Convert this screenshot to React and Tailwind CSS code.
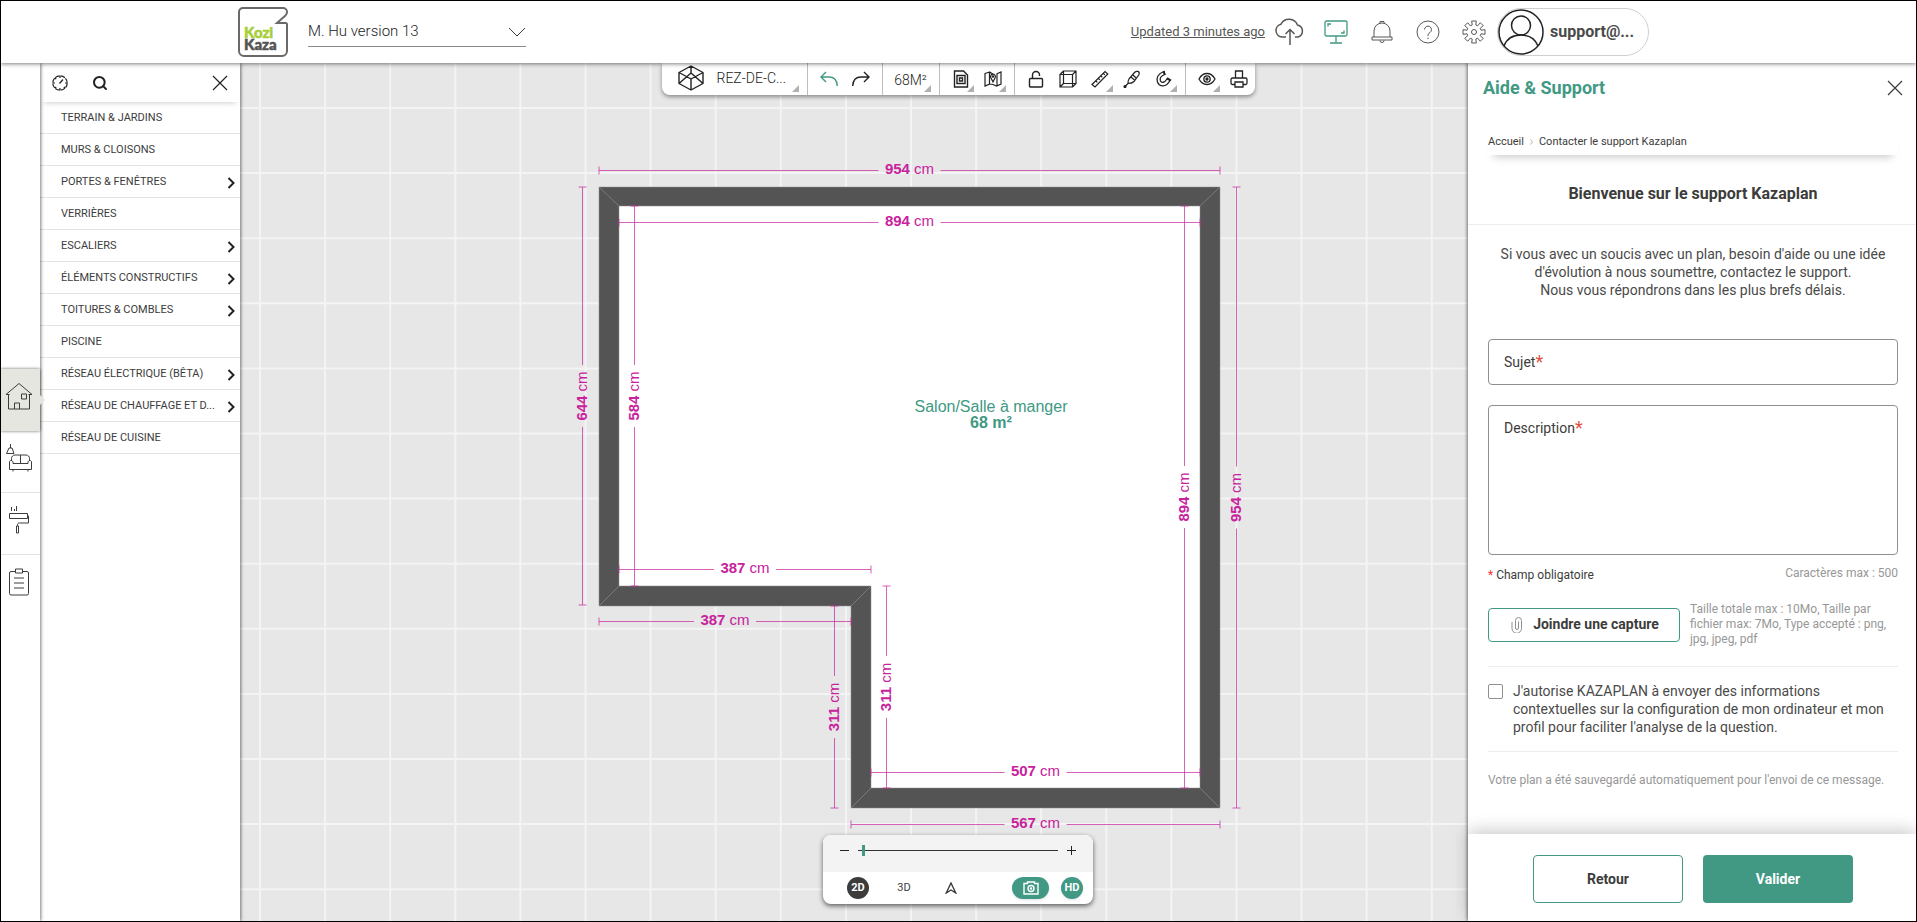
import { useState } from 'react'
import { Search } from 'lucide-react'

const MENU = [
  { label: 'TERRAIN & JARDINS' },
  { label: 'MURS & CLOISONS' },
  { label: 'PORTES & FENÊTRES', children: true },
  { label: 'VERRIÈRES' },
  { label: 'ESCALIERS', children: true },
  { label: 'ÉLÉMENTS CONSTRUCTIFS', children: true },
  { label: 'TOITURES & COMBLES', children: true },
  { label: 'PISCINE' },
  { label: 'RÉSEAU ÉLECTRIQUE (BÊTA)', children: true },
  { label: 'RÉSEAU DE CHAUFFAGE ET D...', children: true },
  { label: 'RÉSEAU DE CUISINE' },
]

// from / to run along the line, at is the fixed coordinate
const DIMENSIONS = [
  { value: 954, axis: 'x', at: 170, from: 599, to: 1220 },
  { value: 894, axis: 'x', at: 222, from: 619, to: 1200 },
  { value: 387, axis: 'x', at: 569, from: 619, to: 871 },
  { value: 387, axis: 'x', at: 621, from: 599, to: 851 },
  { value: 507, axis: 'x', at: 772, from: 871, to: 1200 },
  { value: 567, axis: 'x', at: 824, from: 851, to: 1220 },
  { value: 644, axis: 'y', at: 582, from: 187, to: 605 },
  { value: 584, axis: 'y', at: 634, from: 206, to: 586 },
  { value: 311, axis: 'y', at: 834, from: 606, to: 808 },
  { value: 311, axis: 'y', at: 886, from: 586, to: 788 },
  { value: 894, axis: 'y', at: 1184, from: 206, to: 788 },
  { value: 954, axis: 'y', at: 1236, from: 187, to: 808 },
]

const GRID = Array.from({ length: 22 }, (_, i) => i)

function Icon({ size = 24, width, height, box = '0 0 24 24', stroke = 1, className = '', children }) {
  return (
    <svg
      width={width || size}
      height={height || size}
      viewBox={box}
      fill="none"
      stroke="currentColor"
      strokeWidth={stroke}
      className={`shrink-0 ${className}`}
      aria-hidden="true"
    >
      {children}
    </svg>
  )
}

function Logo() {
  return (
    <svg width="50" height="50" viewBox="0 0 50 50" className="shrink-0" role="img" aria-label="Kozi Kaza">
      <path
        d="M5 1h40a4 4 0 0 1 4 4c0 1.500-.5 2.500-1.500 3.500L39 16h8.500q1.500 0 1.500 1.500V44a5 5 0 0 1-5 5H6a5 5 0 0 1-5-5V5a4 4 0 0 1 4-4z"
        fill="#fff"
        stroke="#6b6868"
        strokeWidth="2"
      />
      <text fontFamily="Lato, sans-serif" fontSize="15" fontWeight="900" strokeWidth=".5">
        <tspan x="6" y="31" fill="#a6ce39" stroke="#a6ce39">Kozi</tspan>
        <tspan x="6" y="43" fill="#545454" stroke="#545454">Kaza</tspan>
      </text>
    </svg>
  )
}

function Header() {
  return (
    <header className="relative z-30 flex h-[62px] shrink-0 items-center bg-white pl-[237px] pr-[267px] shadow-[0_1px_4px_rgba(0,0,0,0.5)]">
      <Logo />
      <div className="relative ml-5 flex w-[218px] items-center border-b border-[#8a8a8a]">
        <select aria-label="Version du plan" className="h-7 w-full appearance-none bg-transparent text-[15px] font-light text-[#222] outline-none">
          <option>M. Hu version 13</option>
        </select>
        <Icon width={18} height={10} box="0 0 18 10" className="pointer-events-none absolute right-0 text-[#3c3c3b]">
          <path d="M1 1l8 8 8-8" />
        </Icon>
      </div>

      <div className="ml-auto flex items-center text-[#575756]">
        <a href="#historique" className="mr-0.5 text-[13px] underline">Updated 3 minutes ago</a>
        <button aria-label="Sauvegarder" className="flex w-[46px] justify-center">
          <Icon width={32} height={28} box="0 0 32 28" stroke={1.500}>
            <path d="M12 19H8a6.500 6.500 0 0 1-1-12.800A9 9 0 0 1 23.500 7 6.200 6.200 0 0 1 24 19h-3" />
            <path d="M16 27V12M11.500 16L16 11.500l4.500 4.500" />
          </Icon>
        </button>
        <button aria-label="Plein écran" className="flex w-[46px] justify-center text-[#419984]">
          <Icon width={24} height={24} stroke={1.300}>
            <rect x="1" y="1" width="22" height="15" rx="1.500" />
            <path d="M12 16v6.500M6 23h12M4 6.500V4h3M20 10.500V13h-3" />
          </Icon>
        </button>
        <button aria-label="Notifications" className="flex w-[46px] justify-center">
          <Icon width={24} height={24}>
            <path d="M4 17V11a8 8 0 0 1 16 0v6M2 17h20v3H2zM10 3V1.500h4V3M10 20.500a2 2 0 0 0 4 0" />
          </Icon>
        </button>
        <button aria-label="Aide" className="flex w-[46px] justify-center">
          <Icon width={24} height={24}>
            <circle cx="12" cy="12" r="11" />
            <path d="M8.500 9.500a3.500 3.500 0 1 1 5.500 3c-1.500 1-2 1.500-2 3.500M12 17.500v1.500" />
          </Icon>
        </button>
        <button aria-label="Paramètres" className="flex w-[46px] justify-center">
          <Icon width={24} height={24}>
            <circle cx="12" cy="12" r="2.500" />
            <path
              d="M10.200 5L9.700 1h4.600l-.5 4 1.900.8L18.300 2.700l3 3L18.200 8.300l.8 1.900 4-.5v4.600l-4-.5-.8 1.900 3.100 2.600-3 3-2.600-3.100-1.900.8.5 4H9.700l.5-4-1.900-.8-2.600 3.100-3-3L5.800 15.700 5 13.800l-4 .5V9.700l4 .5.800-1.900L2.700 5.700l3-3 2.600 3.100z"
              strokeLinejoin="round"
            />
          </Icon>
        </button>
        <button className="flex h-12 w-[152px] items-center gap-1.5 rounded-full border border-[#d0d0d0] text-[#3c3c3b]">
          <Icon size={46} box="0 0 46 46" stroke={1.500} className="text-[#222]">
            <circle cx="23" cy="23" r="22" />
            <circle cx="23" cy="16.500" r="9.500" />
            <path d="M6 37c3-8 9-11 17-11s14 3 17 11" />
          </Icon>
          <span className="text-base font-bold text-[#4a4a49]">support@...</span>
        </button>
      </div>
    </header>
  )
}

function Rail() {
  const tile = 'relative flex h-[62px] w-full items-center justify-center pb-2 pr-[3px]'
  return (
    <nav className="relative z-20 flex w-[39px] shrink-0 flex-col justify-center bg-white pt-0.5 text-[#3c3c3b] shadow-[1px_0_3px_rgba(0,0,0,0.5)]">
      <button aria-label="Construire" className={`${tile} bg-[#e6e6e1] shadow-[0_0_3px_rgba(0,0,0,0.6)]`}>
        <Icon size={28} box="0 0 28 28">
          <path d="M1 12.500h3.500M27 12.500h-3.500M1 12.500L14 1.500l13 11M3.500 12v15h21V12M16.500 12h5v5h-5zM9.500 27v-6h5v6" />
        </Icon>
        <span className="absolute left-full top-[26px] h-0 w-0 border-y-[5px] border-l-[5px] border-y-transparent border-l-[#e6e6e1]" />
      </button>
      <button aria-label="Meubler" className={`${tile} border-b border-[#e3e3e3]`}>
        <Icon size={28} box="0 0 28 28">
          <path d="M5.500 0v4M4 4h3l2 5.500H1.500zM6.500 17v-2.500c0-2 1.500-3.500 3.500-3.500h11c2 0 3.500 1.500 3.500 3.500V17M15.500 11v8.500M4.500 25.500V18c0-2 3-2 3.500 0v1.500h15V18c.5-2 3.500-2 3.500 0v7.500zM8 25.500v2M23 25.500v2" />
        </Icon>
      </button>
      <button aria-label="Décorer" className={`${tile} border-b border-[#e3e3e3]`}>
        <Icon size={28} box="0 0 28 28">
          <path d="M6.500 1v4M9.500 3v2M11.500 0v5M4.500 7.500h18v5h-18zM22.500 10h1v7h-9c-2 0-2 1-2 3M11.500 20h2v7h-2z" />
        </Icon>
      </button>
      <button aria-label="Liste" className={tile}>
        <Icon size={28} box="0 0 28 28">
          <path d="M10 3.500H6a1.500 1.500 0 0 0-1.500 1.500v20.500A1.500 1.500 0 0 0 6 27h16a1.500 1.500 0 0 0 1.500-1.500V5A1.500 1.500 0 0 0 22 3.500h-4M10.500 1h7v4h-7zM9 10h10M9 15h10M9 20h10" />
        </Icon>
      </button>
    </nav>
  )
}

function CloseIcon({ size = 16 }) {
  return (
    <Icon size={size} box="0 0 16 16" stroke={1.200}>
      <path d="M1 1l14 14M15 1L1 15" />
    </Icon>
  )
}

function MenuPanel() {
  return (
    <aside className="z-10 flex w-[200px] shrink-0 flex-col bg-white text-[#222] shadow-[1px_0_3px_rgba(0,0,0,0.5)]">
      <div className="flex h-[39px] items-center px-3 pt-px shadow-[0_4px_6px_-4px_rgba(0,0,0,0.25)]">
        <button aria-label="Récents">
          <Icon size={16} box="0 0 16 16" stroke={1.200}>
            <circle cx="8" cy="8" r="7.200" strokeDasharray="4.900 .8" />
            <path d="M8 1v2M8 13v2M1 8h2M13 8h2M3 3l1.200 1.200M3 13l1.200-1.200M13 13l-1.200-1.200M7.500 8.500l3.500-4" />
          </Icon>
        </button>
        <button aria-label="Rechercher" className="ml-6">
          <Search size={16} strokeWidth={3} />
        </button>
        <button aria-label="Fermer le menu" className="ml-auto">
          <CloseIcon />
        </button>
      </div>
      <ul>
        {MENU.map((item) => (
          <li key={item.label} className="h-8 border-b border-[#e3e3e3]">
            <button className="flex h-full w-full items-center justify-between pl-[21px] pr-1 pt-0.5 text-left">
              <span className="whitespace-nowrap text-[11px] text-[#3c3c3b]">{item.label}</span>
              {item.children && (
                <Icon width={9} height={12} box="0 0 9 12" stroke={2}>
                  <path d="M1.500 1L6.500 6l-5 5" />
                </Icon>
              )}
            </button>
          </li>
        ))}
      </ul>
    </aside>
  )
}

function Dimension({ value, axis, at, from, to }) {
  const mid = (from + to) / 2
  const length = (to - from) / 2
  const turn = axis === 'y' ? ' rotate(-90)' : ''
  const origin = axis === 'y' ? `${at + 0.5} ${mid}` : `${mid} ${at + 0.5}`
  return (
    <g transform={`translate(${origin})${turn}`}>
      <path
        d={`M${-length} 0H-31M31 0H${length}M${-length} -4V4M${length} -4V4`}
        className="stroke-[#c8229c]/70"
      />
      <text y={axis === 'y' ? 4 : 3} textAnchor="middle" className="fill-[#c8229c] text-[15px]">
        <tspan className="font-bold">{value}</tspan> cm
      </text>
    </g>
  )
}

function Plan() {
  return (
    <svg
      viewBox="240 63 1228 858"
      preserveAspectRatio="xMidYMid slice"
      className="absolute inset-0 h-full w-full font-['Liberation_Sans',sans-serif]"
    >
      <g className="stroke-[#f4f4f4]" strokeWidth="2">
        {GRID.map((i) => (
          <path key={i} d={`M${260 + i * 65.1} 0V1000M0 ${108 + i * 65.1}H1500`} />
        ))}
      </g>
      <path
        d="M599 187H1220V808H851V606H599Z"
        fill="#545454"
        stroke="#8f8f8f"
        strokeWidth=".5"
      />
      <path d="M619 206H1200V788H871V586H619Z" fill="#fff" stroke="#8f8f8f" strokeWidth=".5" />
      <path
        d="M599 187L619 206M1220 187L1200 206M1220 808L1200 788M851 808L871 788M851 606L871 586M599 606L619 586"
        stroke="#8c8c8c"
        strokeWidth=".7"
      />
      {DIMENSIONS.map((d) => (
        <Dimension key={`${d.axis}${d.at}`} {...d} />
      ))}
      <g textAnchor="middle" className="fill-[#419984] text-[16px]">
        <text x="991" y="412">Salon/Salle à manger</text>
        <text x="991" y="428" className="font-bold">68 m²</text>
      </g>
    </svg>
  )
}

function MoreMark() {
  return <span className="absolute bottom-[3px] right-[3px] h-0 w-0 border-b-[7px] border-l-[7px] border-b-[#b0b0ac] border-l-transparent" />
}

function Tool({ label, more, wide, className = '', children }) {
  return (
    <button aria-label={label} className={`relative flex h-8 items-center justify-center ${wide ? 'w-[46px]' : 'w-8'} ${className}`}>
      {children}
      {more && <MoreMark />}
    </button>
  )
}

function Toolbar() {
  return (
    <div className="relative flex h-8 divide-x divide-[#bdbdbd] rounded-b-lg bg-white text-[#222] shadow-[0_2px_4px_rgba(0,0,0,0.4)]">
      <div className="flex px-[5px]">
        <button className="relative flex w-[135px] items-center gap-3 pb-0.5 pl-2.5">
          <Icon width={28} height={26} box="0 0 28 26" stroke={1.400}>
            <path d="M14 1l12 6.500v11L14 25 2 18.500v-11zM2 7.500L14 14l12-6.500M14 14v11M14 1v7M2 18.500L14 8l12 10.500" strokeLinejoin="round" />
          </Icon>
          <span className="text-sm font-light text-[#222]">REZ-DE-C...</span>
          <MoreMark />
        </button>
      </div>
      <div className="flex px-[5px]">
        <Tool label="Annuler" className="text-[#419984]">
          <Icon width={18} height={16} box="0 0 18 16" stroke={1.400}>
            <path d="M6 1L1 6l5 5M1 6h8c5 0 8 3 8.300 9" />
          </Icon>
        </Tool>
        <Tool label="Rétablir">
          <Icon width={18} height={16} box="0 0 18 16" stroke={1.400}>
            <path d="M12 1l5 5-5 5M17 6H9C4 6 1 9 .7 15" />
          </Icon>
        </Tool>
      </div>
      <div className="flex px-[5px]">
        <Tool label="Surface" more wide>
          <span className="pt-0.5 text-sm font-light text-[#222]">68M²</span>
        </Tool>
      </div>
      <div className="flex px-[5px]">
        <Tool label="Fond de plan" more>
          <Icon width={16} height={18} box="0 0 16 18" stroke={1.400}>
            <path d="M1.500 1h9l4 4v12h-13zM4 5.500h8v8H4zM6.500 8h3v3h-3z" />
          </Icon>
        </Tool>
        <Tool label="Terrain" more>
          <Icon width={18} height={16} box="0 0 18 16" stroke={1.200}>
            <path d="M1 2.500L5.500 1v12L1 15zM5.500 1L9 3M12.500 3L17 1v12l-4.500 2-3.500-1.500L5.500 13M13 3v12M9 11L6.800 6.500a2.400 2.400 0 1 1 4.400 0z" />
            <circle cx="9" cy="5.500" r=".6" />
          </Icon>
        </Tool>
      </div>
      <div className="flex px-[5px]">
        <Tool label="Verrouiller">
          <Icon width={16} height={18} box="0 0 16 18" stroke={1.400}>
            <rect x="1.500" y="8.500" width="13" height="8.500" rx="1" />
            <path d="M4.500 8.500V5a3.500 3.500 0 0 1 7 0v1" />
          </Icon>
        </Tool>
        <Tool label="Volume">
          <Icon size={18} box="0 0 18 18" stroke={1.200}>
            <path d="M1 4.500h12.500V17H1zM4.500 1H17v12.500H4.500zM1 4.500L4.500 1M13.500 4.500L17 1M13.500 17l3.500-3.500M1 17l3.500-3.500" />
          </Icon>
        </Tool>
        <Tool label="Mesurer" more>
          <Icon size={18} box="0 0 18 18" stroke={1.200}>
            <path d="M1 14.500L14 1.500l2.800 2.500L4 17zM5 11l1.300 1.300M7.500 8.500l1.300 1.300M10 6l1.300 1.300M12.500 3.500l1.300 1.300" />
          </Icon>
        </Tool>
        <Tool label="Pipette">
          <Icon size={18} box="0 0 18 18" stroke={1.200}>
            <path d="M6 9L11.500 2.500c2-2 5.500-1.500 4.500 2L11 11.500c-1.500 1.500-4 2-6 2 0-2 .2-3.500 1-4.500zM8 7l4 3.500M10 5l3.500 3.500M5 13.500L2.500 16" />
            <circle cx="2" cy="16.500" r="1" fill="currentColor" />
          </Icon>
        </Tool>
        <Tool label="Magnétisme" more>
          <Icon size={18} box="0 0 18 18" stroke={1.300}>
            <path d="M9 1.500C3 3.500 1 8 2.500 12c2 5 8.500 6 12.500-1.500l-3-1.500c-2.500 4-5.500 4-6.500 2C4.500 8.500 6 6 9.500 4.500z" />
            <path d="M8.500 1l1.500 4M12 8l4 2.500" strokeWidth="2" />
          </Icon>
        </Tool>
      </div>
      <div className="flex pl-[5px]">
        <Tool label="Affichage" more>
          <Icon width={18} height={14} box="0 0 18 14" stroke={1.300}>
            <path d="M1 7c2-3.800 4.700-5.500 8-5.500S15 3.200 17 7c-2 3.800-4.700 5.500-8 5.500S3 10.800 1 7z" />
            <circle cx="9" cy="7" r="3.200" />
            <circle cx="9" cy="7" r="1" fill="currentColor" />
          </Icon>
        </Tool>
        <Tool label="Imprimer">
          <Icon width={18} height={18} box="0 0 18 18" stroke={1.300}>
            <path d="M5.500 8V1h7v7M4.500 14.500H2.500A1.500 1.500 0 0 1 1 13V9.500A1.500 1.500 0 0 1 2.500 8h13A1.500 1.500 0 0 1 17 9.500V13a1.500 1.500 0 0 1-1.500 1.500h-2M5 12h8v5H5z" />
          </Icon>
        </Tool>
      </div>
    </div>
  )
}

function ViewControls() {
  const [zoom, setZoom] = useState(2)
  return (
    <div className="relative w-[270px] overflow-hidden rounded-lg bg-white shadow-[0_2px_5px_rgba(0,0,0,0.6)]">
      <div className="flex h-[37px] items-center justify-between bg-[#f3f3f3] px-[17px] pb-1.5 text-[#222]">
        <button aria-label="Dézoomer">
          <Icon size={9} box="0 0 9 9"><path d="M0 4.500h9" /></Icon>
        </button>
        <input
          type="range"
          aria-label="Zoom"
          value={zoom}
          onChange={(e) => setZoom(e.target.value)}
          className="h-3 w-[200px] appearance-none bg-transparent bg-[linear-gradient(#333,#333)] bg-[length:100%_1px] bg-center bg-no-repeat [&::-webkit-slider-thumb]:h-[11px] [&::-webkit-slider-thumb]:w-[3px] [&::-webkit-slider-thumb]:appearance-none [&::-webkit-slider-thumb]:bg-[#419984]"
        />
        <button aria-label="Zoomer">
          <Icon size={9} box="0 0 9 9"><path d="M0 4.500h9M4.500 0v9" /></Icon>
        </button>
      </div>
      <div className="flex h-8 items-center pl-6 pr-2.5 text-[11px]">
        <button className="h-[22px] w-[22px] rounded-full bg-[#3c3c3b] font-bold text-white">2D</button>
        <button className="ml-6 h-[22px] w-[22px] text-[#3c3c3b]">3D</button>
        <button aria-label="Visite" className="ml-[25px] flex h-[22px] w-[22px] items-center justify-center text-[#3c3c3b]">
          <Icon size={12} box="0 0 12 12" stroke={1.400}>
            <path d="M6 1l4.800 10L6 8 1.200 11z" />
          </Icon>
        </button>
        <button aria-label="Photo" className="ml-auto flex h-[22px] w-[37px] items-center justify-center rounded-full bg-[#419984] text-white shadow">
          <Icon width={16} height={14} box="0 0 16 14" stroke={1.400}>
            <path d="M1 2.500h3.500V1h7v1.500H15V13H1z" />
            <circle cx="8" cy="7.500" r="3" />
            <circle cx="8" cy="7.500" r=".6" />
          </Icon>
        </button>
        <button className="ml-3 h-[22px] w-[22px] rounded-full bg-[#419984] font-bold text-white shadow">HD</button>
      </div>
    </div>
  )
}

function SupportPanel() {
  const floating = 'pointer-events-none absolute left-4 top-3.5 flex text-[14px] leading-[18px] peer-[:not(:placeholder-shown)]:hidden'
  return (
    <aside className="z-20 flex w-[448px] shrink-0 flex-col bg-white text-[#3c3c3b] shadow-[-1px_0_3px_rgba(0,0,0,0.5)]">
      <div className="flex h-[50px] items-center justify-between pl-[15px] pr-[13px]">
        <h1 className="text-lg font-bold text-[#419984]">Aide & Support</h1>
        <button aria-label="Fermer l'aide">
          <CloseIcon />
        </button>
      </div>

      <nav className="ml-5 mr-[18px] mt-[18px] flex h-6 items-center gap-1.5 pb-0.5 text-[11px] shadow-[0_8px_8px_-6px_rgba(0,0,0,0.22)]">
        <a href="#accueil">Accueil</a>
        <Icon width={3} height={6} box="0 0 3 6" className="text-[#b5b5b5]">
          <path d="M.5 .5L2.500 3 .5 5.500" />
        </Icon>
        <a href="#contact">Contacter le support Kazaplan</a>
      </nav>

      <h2 className="mt-[27px] border-b border-[#ececec] pb-[18px] pl-0.5 text-center text-base font-bold">
        Bienvenue sur le support Kazaplan
      </h2>
      <p className="pl-5 pr-[18px] pt-5 text-center text-[14px] leading-[18px] text-[#4a4a49]">
        Si vous avec un soucis avec un plan, besoin d'aide ou une idée d'évolution à nous soumettre, contactez le support.
        <br />
        Nous vous répondrons dans les plus brefs délais.
      </p>

      <form className="flex flex-1 flex-col" onSubmit={(e) => e.preventDefault()}>
        <div className="pl-5 pr-[18px] pt-10">
          <div className="relative">
            <input id="sujet" placeholder=" " className="peer block h-[46px] w-full rounded-sm border border-[#8f8f8f] px-4" />
            <label htmlFor="sujet" className={floating}>
              Sujet<span className="text-lg leading-[18px] text-[#e0523f]">*</span>
            </label>
          </div>
          <div className="relative mt-5">
            <textarea id="description" placeholder=" " className="peer block h-[150px] w-full resize-none rounded-sm border border-[#8f8f8f] px-4 pt-4" />
            <label htmlFor="description" className={floating}>
              Description<span className="text-lg leading-[18px] text-[#e0523f]">*</span>
            </label>
          </div>
          <div className="mt-2.5 flex justify-between text-xs">
            <p className="pt-0.5"><span className="text-red-500">*</span> Champ obligatoire</p>
            <p className="text-[#979797]">Caractères max : 500</p>
          </div>
          <div className="mt-[19px] flex items-center gap-2.5 border-b border-[#ececec] pb-[19px]">
            <button type="button" className="flex h-[34px] w-[192px] shrink-0 items-center justify-center gap-2.5 rounded-sm border border-[#419984] pl-0.5 text-[14px] font-bold">
              <Icon width={12} height={16} box="0 0 12 16" className="text-[#8f8f8f]">
                <path d="M1 5v6.500a4.300 4.300 0 0 0 9.500 0V3.500a3 3 0 0 0-6 0v7.500a1.500 1.500 0 0 0 3 0V4.500" />
              </Icon>
              Joindre une capture
            </button>
            <p className="text-xs leading-[15px] text-[#979797]">
              Taille totale max : 10Mo, Taille par fichier max: 7Mo, Type accepté : png, jpg, jpeg, pdf
            </p>
          </div>
          <label className="flex gap-2.5 border-b border-[#ececec] py-[15px] text-[14px] leading-[18px] text-[#4a4a49]">
            <input type="checkbox" className="mt-0.5 h-[15px] w-[15px] shrink-0 appearance-none rounded-xs border border-[#8f8f8f] checked:bg-[#419984]" />
            J'autorise KAZAPLAN à envoyer des informations contextuelles sur la configuration de mon ordinateur et mon profil pour faciliter l'analyse de la question.
          </label>
          <p className="pt-5 text-xs text-[#979797]">
            Votre plan a été sauvegardé automatiquement pour l'envoi de ce message.
          </p>
        </div>

        <div className="mt-auto flex justify-center gap-5 pb-[18px] pl-5 pr-[18px] pt-[21px] text-[14px] font-bold shadow-[0_-4px_16px_rgba(0,0,0,0.2)]">
          <button type="button" className="h-12 w-[150px] rounded-sm border border-[#419984]">Retour</button>
          <button type="submit" className="h-12 w-[150px] rounded-sm bg-[#419984] text-white">Valider</button>
        </div>
      </form>
    </aside>
  )
}

export default function App() {
  return (
    <div className="flex h-screen flex-col overflow-hidden border border-black bg-white font-['Roboto',sans-serif]">
      <Header />
      <div className="flex min-h-0 flex-1">
        <Rail />
        <MenuPanel />
        {/* the left padding makes up for the wider support panel, so both bars sit at the window's centre */}
        <main className="relative flex min-w-0 flex-1 flex-col items-center justify-between bg-[#e7e7e7] pb-[17px] pl-[208px]">
          <Plan />
          <Toolbar />
          <ViewControls />
        </main>
        <SupportPanel />
      </div>
    </div>
  )
}
